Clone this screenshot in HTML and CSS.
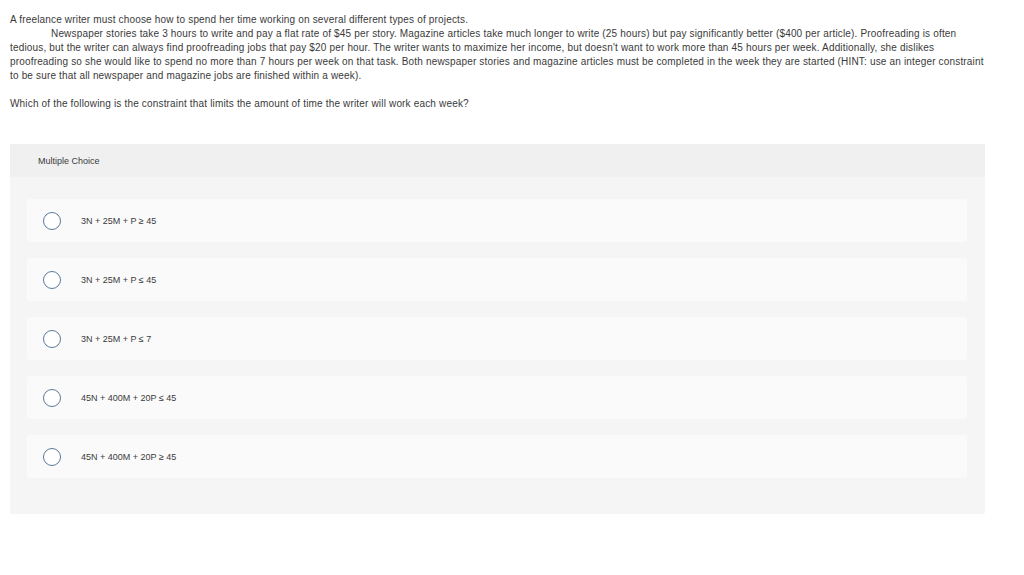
FILE: index.html
```html
<!DOCTYPE html>
<html>
<head>
<meta charset="utf-8">
<link rel="stylesheet" href="styles.css">
</head>
<body>
<div class="prompt">
<p class="line">A freelance writer must choose how to spend her time working on several different types of projects.</p>
<p class="para"><span class="indent"></span>Newspaper stories take 3 hours to write and pay a flat rate of $45 per story. Magazine articles take much longer to write (25 hours) but pay significantly better ($400 per article). Proofreading is often<br>tedious, but the writer can always find proofreading jobs that pay $20 per hour. The writer wants to maximize her income, but doesn't want to work more than 45 hours per week. Additionally, she dislikes<br>proofreading so she would like to spend no more than 7 hours per week on that task. Both newspaper stories and magazine articles must be completed in the week they are started (HINT: use an integer constraint<br>to be sure that all newspaper and magazine jobs are finished within a week).</p>
<p class="question">Which of the following is the constraint that limits the amount of time the writer will work each week?</p>
</div>
<section class="panel">
<div class="panel-head">Multiple Choice</div>
<div class="options">
<label class="option"><span class="radio"></span><span class="opt-text">3N + 25M + P ≥ 45</span></label>
<label class="option"><span class="radio"></span><span class="opt-text">3N + 25M + P ≤ 45</span></label>
<label class="option"><span class="radio"></span><span class="opt-text">3N + 25M + P ≤ 7</span></label>
<label class="option"><span class="radio"></span><span class="opt-text">45N + 400M + 20P ≤ 45</span></label>
<label class="option"><span class="radio"></span><span class="opt-text">45N + 400M + 20P ≥ 45</span></label>
</div>
</section>
</body>
</html>
```
FILE: styles.css
```css
html, body {
  margin: 0;
  padding: 0;
  background: #ffffff;
}
body {
  font-family: "Liberation Sans", Arial, sans-serif;
  color: #3a3a3a;
  padding: 13px 10px 0 10px;
}
.prompt p {
  margin: 0;
  font-size: 10px;
  line-height: 14px;
  letter-spacing: 0.17px;
  white-space: nowrap;
}
.indent {
  display: inline-block;
  width: 41px;
}
.question {
  margin-top: 14px !important;
}
.panel {
  margin-top: 33px;
  width: 975px;
  background: #f5f5f5;
  border-radius: 2px;
  padding-bottom: 36px;
}
.panel-head {
  height: 33px;
  background: #f0f0f0;
  display: flex;
  align-items: center;
  padding-left: 28px;
  font-size: 9px;
  color: #3a3a3a;
}
.options {
  display: flex;
  flex-direction: column;
  gap: 16px;
  padding: 22px 18px 0 17px;
}
.option {
  height: 43px;
  background: #fafafa;
  border-radius: 3px;
  display: flex;
  align-items: center;
  padding-left: 16px;
}
.radio {
  width: 18px;
  height: 18px;
  border: 1px solid #5a7a9a;
  border-radius: 50%;
  background: #fff;
  box-sizing: border-box;
  flex: none;
}
.opt-text {
  margin-left: 20px;
  font-size: 9px;
  color: #3a3a3a;
}
```
